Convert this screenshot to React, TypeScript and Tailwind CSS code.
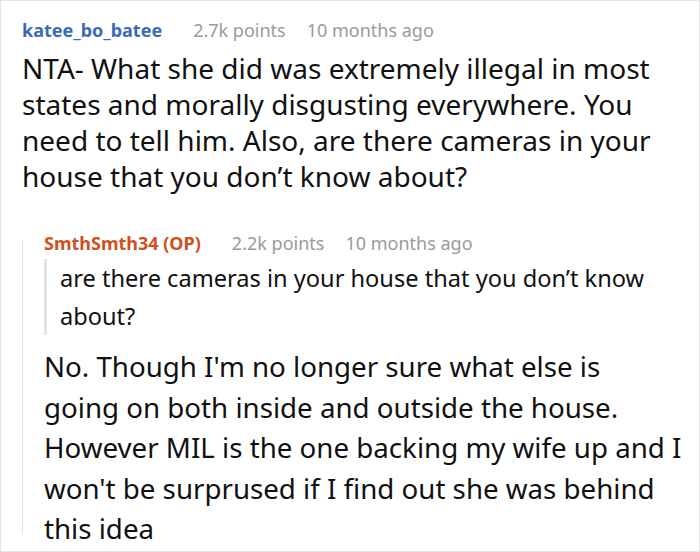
export default function App() {
  return (
    <div className="w-[700px] h-[552px] border border-[#e4e4e4] bg-white overflow-hidden font-['Noto_Sans',sans-serif] text-[#111]">
      <div className="pl-[21px] pt-[16px]">
        <div className="flex items-baseline text-[18px] leading-[26px]">
          <span className="font-bold text-[#3b6bb5]">katee_bo_batee</span>
          <span className="ml-[31px] text-[#9a9a9a]">2.7k points</span>
          <span className="ml-[21px] text-[#9a9a9a]">10 months ago</span>
        </div>
        <p className="mt-[7px] w-[660px] text-[28px] leading-[36px]">
          NTA- What she did was extremely illegal in most states and morally disgusting everywhere. You need to tell him. Also, are there cameras in your house that you don’t know about?
        </p>
        <div className="mt-[36px] flex">
          <div className="mt-[10px] h-[293px] w-px bg-[#e2e2e2]" />
          <div className="pl-[21px]">
            <div className="flex items-baseline text-[18px] leading-[26px]">
              <span className="font-bold text-[#d0501e]">SmthSmth34 (OP)</span>
              <span className="ml-[31px] text-[#9a9a9a]">2.2k points</span>
              <span className="ml-[21px] text-[#9a9a9a]">10 months ago</span>
            </div>
            <div className="mt-[3px] border-l-[3px] border-[#e2e2e2] pl-[13px]">
              <p className="w-[620px] text-[23.6px] leading-[38px]">
                are there cameras in your house that you don’t know about?
              </p>
            </div>
            <p className="mt-[11px] whitespace-nowrap text-[27.7px] leading-[40.5px]">
              No. Though I'm no longer sure what else is
              <br />
              going on both inside and outside the house.
              <br />
              However MIL is the one backing my wife up and I
              <br />
              won't be surprused if I find out she was behind
              <br />
              this idea
            </p>
          </div>
        </div>
      </div>
    </div>
  );
}
